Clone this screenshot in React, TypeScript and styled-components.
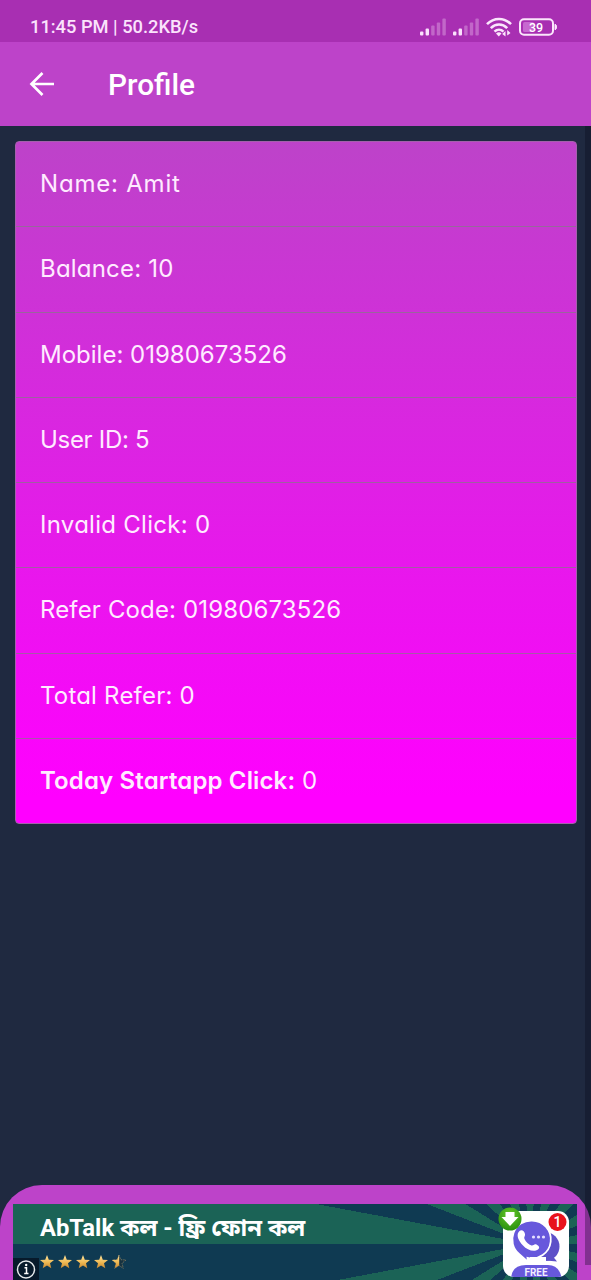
import React from "react";
import styled, { createGlobalStyle } from "styled-components";

const Global = createGlobalStyle`
  html, body { margin: 0; padding: 0; background: #1f2940; }
  body { width: 591px; height: 1280px; overflow: hidden; }
  * { box-sizing: border-box; }
`;

const Screen = styled.div`
  position: relative;
  display: flex;
  flex-direction: column;
  width: 591px;
  height: 1280px;
  overflow: hidden;
  background: #1f2940;
  color: #fff;
  font-family: Roboto, sans-serif;
`;

const StatusBar = styled.header`
  display: flex;
  justify-content: space-between;
  align-items: center;
  flex: none;
  height: 42px;
  padding: 11px 34px 0 30px;
  background: #a82fb2;
`;

const StatusText = styled.span`
  font-size: 18.3px;
  line-height: 22px;
  font-weight: 500;
  color: #fbe3fc;
`;

const StatusIcons = styled.div`
  display: flex;
  align-items: center;
  gap: 7px;
  height: 22px;
`;

const AppBar = styled.nav`
  display: flex;
  align-items: center;
  flex: none;
  height: 84px;
  padding: 0 0 0 29px;
  background: #bd43c9;
`;

const Title = styled.h1`
  margin: 2px 0 0 53px;
  font-size: 29.8px;
  line-height: 36px;
  font-weight: 500;
`;

const Content = styled.main`
  flex: 1;
  padding: 15px 14px 0 15px;
`;

const Card = styled.section`
  display: grid;
  grid-template-rows: 85px 86px 85px 85px 85px 86px 85px 84px;
  height: 683px;
  border: 1px solid #a560ac;
  border-radius: 4px;
  background: linear-gradient(180deg, #bd43c9 0%, #ff00ff 96%) border-box;
`;

const Row = styled.div`
  display: flex;
  align-items: center;
  padding: 0 24px 1px;
  border-bottom: 1px solid rgba(128, 128, 128, 0.65);
  &:last-child { border-bottom: 0; }
`;

const RowText = styled.span<{ $track: number }>`
  font-family: Inter, sans-serif;
  font-feature-settings: "cv11" 1;
  font-size: 24px;
  line-height: 32px;
  font-weight: 400;
  letter-spacing: ${(p) => p.$track}px;
  white-space: pre;
  color: #ffebff;
  b { font-weight: 600; }
`;

const ScrollTrack = styled.div`
  position: absolute;
  right: 0;
  top: 126px;
  width: 6px;
  height: 1139px;
  background: rgba(5, 10, 25, 0.32);
`;

const AdPanel = styled.footer`
  flex: none;
  height: 95px;
  padding: 19px 14px 0 13px;
  border-radius: 42px 42px 0 0;
  background: #bd43c9;
`;

const Banner = styled.div`
  position: relative;
  display: flex;
  justify-content: space-between;
  height: 76px;
  background: repeating-conic-gradient(
    from -90deg at 517px 40px,
    #1b6356 0deg 10.588deg,
    #0f3a52 10.588deg 21.176deg
  );
`;

const AdCopy = styled.div`
  display: flex;
  flex-direction: column;
  padding: 8px 0 0 27px;
`;

const AdTitle = styled.div`
  font-family: Roboto, "Noto Sans Bengali", "Noto Sans", sans-serif;
  font-size: 23.8px;
  line-height: 32px;
  font-weight: 700;
  white-space: nowrap;
`;

const Stars = styled.div`
  display: flex;
  gap: 4px;
  margin-top: 11px;
`;

const InfoBadge = styled.div`
  position: absolute;
  left: 0;
  bottom: 0;
  width: 26px;
  height: 22px;
  background: #071a2b;
`;

const AdIcon = styled.div`
  width: 78px;
  height: 76px;
  margin-right: 4px;
  svg { display: block; }
`;

const Signal = () => (
  <svg width="26" height="18" viewBox="0 0 26 18">
    {[4, 7, 10, 13, 17].map((h, i) => (
      <rect key={h} x={i * 5.6} y={17.5 - h} width="3.4" height={h} rx="1" fill="#fae1fc" opacity={i < 2 ? 1 : 0.32} />
    ))}
  </svg>
);

const Wifi = () => (
  <svg width="26" height="20" viewBox="0 0 26 20" fill="none" stroke="#fbe6fc" strokeWidth="2.6">
    <path d="M1 7.2C7.8.2 18.2.2 25 7.2" />
    <path d="M4.8 11.1c4.7-4.8 11.7-4.8 16.4 0" />
    <path d="M8.5 14.7c2.6-2.6 6.400-2.6 9 0" />
    <path d="M10 16.5Q13 14.2 15.5 16.5L12.8 19.5z" fill="#fbe6fc" stroke="none" />
    <path d="M19.5 14v5.5l-3.3-2.5zM21.2 13v5.5l3.3-2.5z" fill="#fbe6fc" stroke="none" />
  </svg>
);

const Battery = () => (
  <svg width="38" height="18" viewBox="0 0 38 18">
    <rect x="1" y="1.2" width="33" height="15.6" rx="4" fill="none" stroke="#fbe6fc" strokeWidth="2" />
    <rect x="4" y="4" width="11" height="10" rx="1.5" fill="#c768d0" />
    <path d="M36 6.2q1.5.3 1.5 2.8T36 11.8z" fill="#fbe6fc" stroke="#fbe6fc" />
    <text x="17" y="13.5" textAnchor="middle" fill="#fff" fontFamily="Roboto" fontSize="12.5" fontWeight="500">39</text>
  </svg>
);

const BackArrow = () => (
  <svg width="26" height="26" viewBox="0 0 26 26" fill="none" stroke="#fff" strokeWidth="2.7">
    <path d="M25 13H3M13.5 2 2.5 13l11 11" />
  </svg>
);

const starPath = "M7 0 8.8 4.7 14 5 10 8.3 11.3 13.3 7 10.5 2.7 13.3 4 8.3 0 5 5.2 4.7z";

const Star = ({ half = false }: { half?: boolean }) => (
  <svg width="14" height="14" viewBox="0 0 14 14">
    <defs>
      <linearGradient id="gold" x1="0" y1="0" x2="0" y2="1">
        <stop offset="0" stopColor="#ffe6a0" />
        <stop offset="0.55" stopColor="#efb953" />
        <stop offset="1" stopColor="#c88731" />
      </linearGradient>
      <clipPath id="left"><rect width="7.2" height="14" /></clipPath>
    </defs>
    {half && <path d={starPath} fill="#173240" stroke="#9b8d68" strokeWidth="0.7" strokeDasharray="1.5 1" />}
    <path d={starPath} fill="url(#gold)" clipPath={half ? "url(#left)" : undefined} />
  </svg>
);

const Info = () => (
  <svg width="26" height="22" viewBox="0 0 26 22">
    <circle cx="13" cy="11.5" r="8.5" fill="none" stroke="#e5e9eb" strokeWidth="1.5" />
    <path d="M11.5 9.8h2v5.5M11.2 15.5h4.3" fill="none" stroke="#fff" strokeWidth="1.5" />
    <circle cx="13.2" cy="7" r="1.2" fill="#fff" />
  </svg>
);

const CallAppIcon = () => (
  <svg width="78" height="76" viewBox="0 0 78 76">
    <defs>
      <clipPath id="tile"><rect x="8" y="7" width="66" height="66" rx="11" /></clipPath>
      <radialGradient id="green" cx="0.5" cy="0.3" r="0.7">
        <stop offset="0" stopColor="#65c929" />
        <stop offset="1" stopColor="#2b9010" />
      </radialGradient>
    </defs>
    <rect x="8" y="7" width="66" height="66" rx="11" fill="#fff" />
    <g clipPath="url(#tile)">
      <circle cx="50" cy="42.5" r="14.5" fill="#5d50c8" />
      <path d="M56 50l6 7.5-11-1z" fill="#5d50c8" />
      <path d="M37 16.5a19 19 0 1 1-4.5 37.5L33 58 24 50A19 19 0 0 1 37 16.5z" fill="#6758dc" stroke="#fff" strokeWidth="1.8" />
      <path d="M35 53h16v5H34z" fill="#fff" />
      <path d="M24.5 27c2-2 5 0 5.5 3 .5 2-1.5 3-.5 5 1.5 3 4 5.5 7 6.5 2 .5 2.5-2 5-1 3 1.5 3.5 3.5 1.5 5-4 3-11 .5-15-4-4.5-4.5-7.5-11-3.5-14.5z" fill="#fff" />
      <g fill="#e4dfff">
        <circle cx="38.5" cy="33" r="1.6" />
        <circle cx="43.5" cy="33" r="1.6" />
        <circle cx="48.5" cy="33" r="1.6" />
      </g>
      <path d="M16 76q0-15 15-15h22q12 0 14 15z" fill="#6758dc" />
      <text x="41" y="71.5" textAnchor="middle" fill="#f2efff" fontFamily="Roboto" fontSize="10" fontWeight="700" textLength="23" lengthAdjust="spacingAndGlyphs">FREE</text>
    </g>
    <circle cx="15" cy="15" r="11.5" fill="url(#green)" />
    <path d="M10.500 8h9v5h4L15 22l-8.500-9h4z" fill="#fff" />
    <circle cx="62.5" cy="18" r="9" fill="#e8131c" />
    <text x="62.5" y="23" textAnchor="middle" fill="#fff" fontFamily="Roboto" fontSize="14" fontWeight="500">1</text>
  </svg>
);

const rows = [
  { text: "Name: Amit", track: 0.8 },
  { text: "Balance: 10", track: 0.2 },
  { text: "Mobile: 01980673526", track: 0 },
  { text: "User ID: 5", track: -0.3 },
  { text: "Invalid Click: 0", track: 0.28 },
  { text: "Refer Code: 01980673526", track: 0.14 },
  { text: "Total Refer: 0", track: 0.2 },
];

export default function App() {
  return (
    <>
      <Global />
      <Screen>
        <StatusBar>
          <StatusText>11:45 PM | 50.2KB/s</StatusText>
          <StatusIcons><Signal /><Signal /><Wifi /><Battery /></StatusIcons>
        </StatusBar>
        <AppBar><BackArrow /><Title>Profile</Title></AppBar>
        <Content>
          <Card>
            {rows.map((r) => (
              <Row key={r.text}><RowText $track={r.track}>{r.text}</RowText></Row>
            ))}
            <Row><RowText $track={0.14}><b>Today Startapp Click:</b> 0</RowText></Row>
          </Card>
        </Content>
        <AdPanel>
          <Banner>
            <AdCopy>
              <AdTitle>AbTalk কল - ফ্রি ফোন কল</AdTitle>
              <Stars><Star /><Star /><Star /><Star /><Star half /></Stars>
            </AdCopy>
            <AdIcon><CallAppIcon /></AdIcon>
            <InfoBadge><Info /></InfoBadge>
          </Banner>
        </AdPanel>
        <ScrollTrack />
      </Screen>
    </>
  );
}
